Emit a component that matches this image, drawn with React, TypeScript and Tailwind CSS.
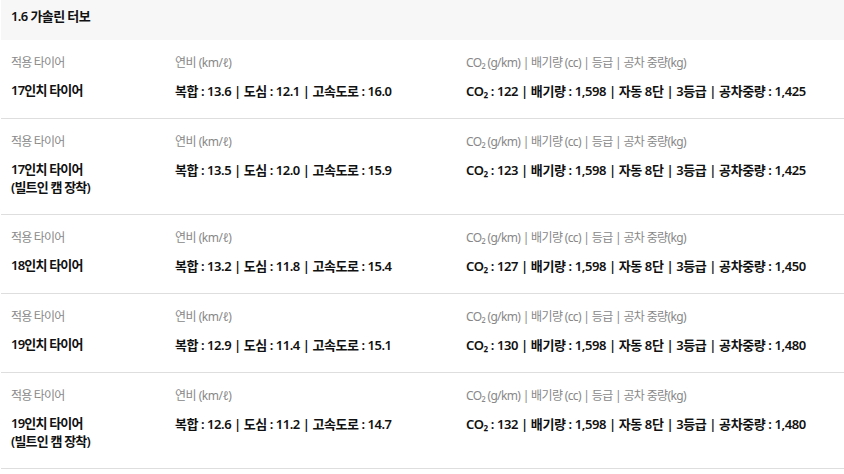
const rows = [
  { tire: ['17인치 타이어'], fuel: ['13.6', '12.1', '16.0'], co2: '122', weight: '1,425' },
  { tire: ['17인치 타이어', '(빌트인 캠 장착)'], fuel: ['13.5', '12.0', '15.9'], co2: '123', weight: '1,425' },
  { tire: ['18인치 타이어'], fuel: ['13.2', '11.8', '15.4'], co2: '127', weight: '1,450' },
  { tire: ['19인치 타이어'], fuel: ['12.9', '11.4', '15.1'], co2: '130', weight: '1,480' },
  { tire: ['19인치 타이어', '(빌트인 캠 장착)'], fuel: ['12.6', '11.2', '14.7'], co2: '132', weight: '1,480' },
];

export default function App() {
  return (
    <div
      className="min-h-screen bg-white pl-px text-[#111]"
      style={{ fontFamily: '"Noto Sans", "Noto Sans CJK KR", sans-serif' }}
    >
      {/* ── Section title ── */}
      <div className="h-[40px] bg-[#f7f7f7] pl-[10px] pt-[7px]">
        <h3 className="text-[13px] leading-[18px] font-semibold tracking-[-0.6px]">1.6 가솔린 터보</h3>
      </div>

      {/* ── Spec rows ── */}
      {rows.map((r, i) => (
        <div key={i} className="flex border-b border-[#dedede] pl-[10px] pt-[14px] pb-[18px]">
          <div className="w-[164px] shrink-0">
            <p className="text-[12px] leading-[18px] text-[#888] tracking-[-0.8px]">적용 타이어</p>
            <p className="mt-[10px] text-[13px] leading-[17.5px] font-semibold tracking-[-0.8px]">
              {r.tire.map((t) => (
                <span key={t} className="block">{t}</span>
              ))}
            </p>
          </div>
          <div className="w-[291px] shrink-0">
            <p className="text-[12px] leading-[18px] text-[#888] tracking-[-0.5px]">연비 (km/ℓ)</p>
            <p className="mt-[10px] text-[13px] leading-[18px] font-semibold tracking-[-0.45px]">
              복합 : {r.fuel[0]} | 도심 : {r.fuel[1]} | 고속도로 : {r.fuel[2]}
            </p>
          </div>
          <div className="flex-1">
            <p className="text-[12px] leading-[18px] text-[#888] tracking-[-0.65px]">
              CO₂ (g/km) | 배기량 (cc) | 등급 | 공차 중량(kg)
            </p>
            <p className="mt-[10px] text-[13px] leading-[18px] font-semibold tracking-[-0.4px]">
              CO₂ : {r.co2} | 배기량 : 1,598 | 자동 8단 | 3등급 | 공차중량 : {r.weight}
            </p>
          </div>
        </div>
      ))}
    </div>
  );
}
